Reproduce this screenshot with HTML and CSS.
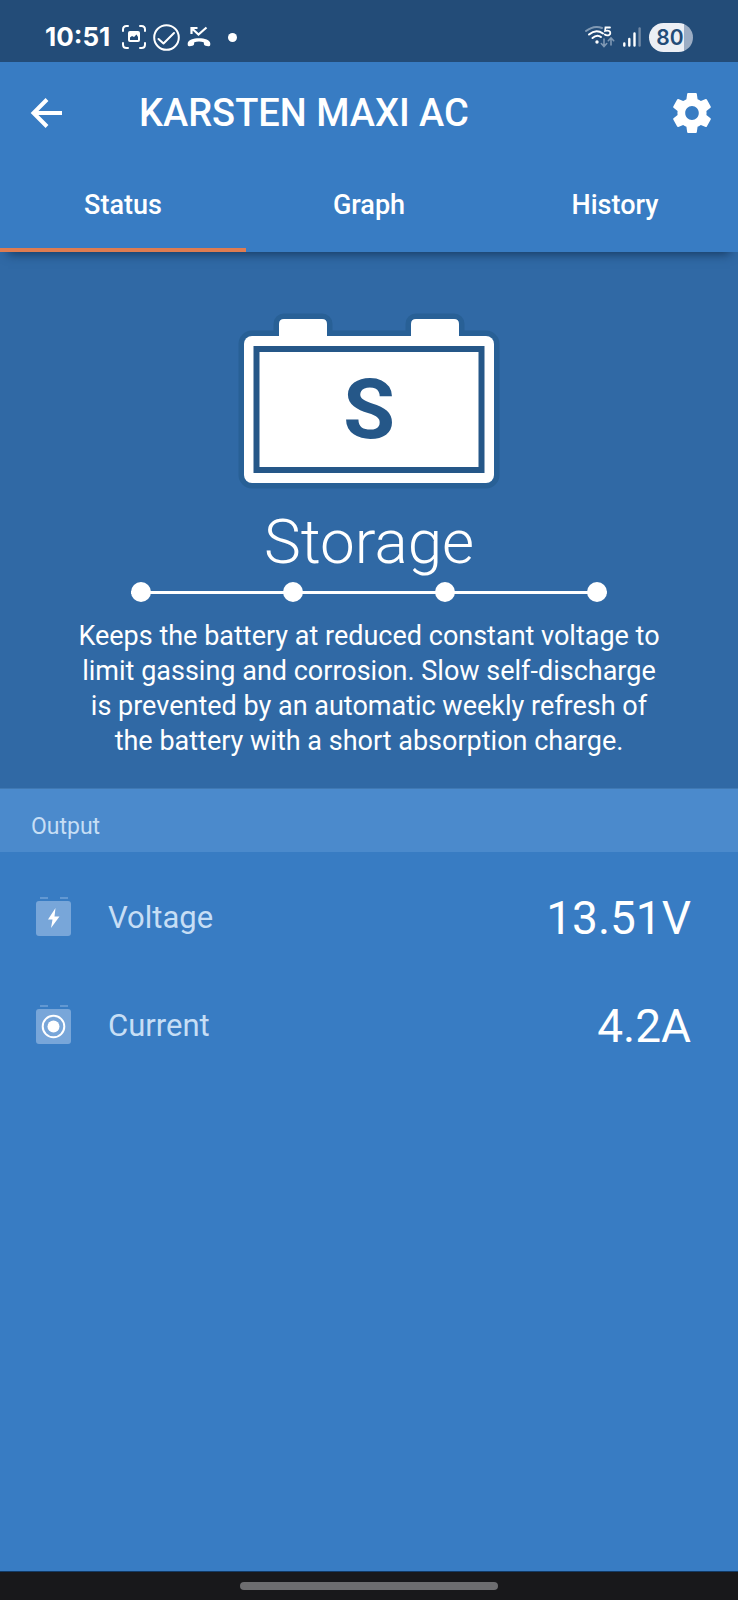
FILE: index.html
```html
<!DOCTYPE html>
<html lang="en">
<head>
<meta charset="utf-8">
<meta name="viewport" content="width=device-width, initial-scale=1">
<title>KARSTEN MAXI AC</title>
<link rel="stylesheet" href="styles.css">
</head>
<body>
<div class="screen">
  <div class="statusbar">
    <span class="clock">10:51</span>
    <div class="notifications">
      <svg width="24" height="24" viewBox="0 0 24 24" fill="none" stroke="#fff" stroke-width="2" stroke-linecap="round">
        <path d="M1 6V4.500Q1 1 4.500 1H6M18 1h1.500Q23 1 23 4.500V6M23 18v1.500Q23 23 19.500 23H18M6 23H4.500Q1 23 1 19.500V18"/>
        <rect x="6" y="6" width="12" height="11" rx="2" fill="#fff" stroke="none"/>
        <path d="M8 15v-2.500l2-1.500 2 1 2.500-2.500L16 12v3z" fill="#234c78" stroke="none"/>
      </svg>
      <svg width="27" height="27" viewBox="0 0 27 27" fill="none" stroke="#fff" stroke-width="2" stroke-linecap="round" stroke-linejoin="round">
        <circle cx="13.500" cy="13.500" r="12.300"/>
        <path d="M5.500 15l5 4.500L21 9"/>
      </svg>
      <svg width="24" height="22" viewBox="0 0 24 22" fill="none" stroke="#fff">
        <path d="M4.500 8V2H10.500M5 2.500l6.500 6L19.500 1.500" stroke-width="2.200"/>
        <path d="M.7 17.500C1 10.500 23 10.500 23.300 17.500c.1 2.500-.6 2.900-2 2.700-1.800-.3-4-.4-4.300-1.700l-.3-2.300c-3-1-6.400-1-9.400 0L7 18.500c-.3 1.300-2.500 1.400-4.300 1.700-1.400.2-2.100-.2-2-2.700z" fill="#fff" stroke="none"/>
      </svg>
      <span class="more-dot"></span>
    </div>
    <div class="system">
      <svg width="30" height="22" viewBox="0 0 30 22" fill="none" stroke="#fff" stroke-width="2" stroke-linecap="round">
        <path d="M1 5Q9-1 17 2" stroke="#7f98b3"/>
        <path d="M4 8.500Q11 2.500 18 7.500M7.500 12Q12 8 16 11"/>
        <circle cx="12" cy="16" r="1.700" fill="#fff" stroke="none"/>
        <path d="M25 1.500h-4.500l-.4 3.500c4-1 5.200.5 5.200 2 0 2.600-3.700 3-5.500 1.500" stroke-width="1.800"/>
        <path d="M19 13v7m-2.700-2.500L19 20.500l2.700-3M26 19v-7m-2.700 2.700L26 12l2.700 2.700" stroke="#7f98b3" stroke-width="1.600"/>
      </svg>
      <svg width="18" height="20" viewBox="0 0 18 20" stroke-width="2.400" stroke-linecap="round" stroke="#fff">
        <path d="M1.300 16.500v2M6.300 12v6.500M11.500 6.500v12"/>
        <path d="M16.600 1.500v17" stroke="#7189a5"/>
      </svg>
      <span class="charge">80</span>
    </div>
  </div>

  <header class="appbar">
    <div class="toolbar">
      <button class="icon-button" type="button" aria-label="Back">
        <svg width="32" height="32" viewBox="0 0 32 32" fill="none" stroke="#fff" stroke-width="4">
          <path d="M17 2.500L3.500 16 17 29.500M3.500 16H32"/>
        </svg>
      </button>
      <h1 class="title">KARSTEN MAXI AC</h1>
      <button class="icon-button" type="button" aria-label="Settings">
        <svg width="38" height="40" viewBox="2.200 2 19.600 20" preserveAspectRatio="none" fill="#fff">
          <path d="M19.430 12.980c.04-.32.070-.64.070-.98s-.03-.66-.07-.98l2.110-1.650c.19-.15.24-.42.120-.64l-2-3.460c-.12-.22-.39-.3-.61-.22l-2.490 1c-.52-.4-1.080-.73-1.690-.98l-.38-2.650C14.460 2.180 14.250 2 14 2h-4c-.25 0-.46.180-.49.420l-.38 2.650c-.61.25-1.170.59-1.690.98l-2.490-1c-.23-.09-.49 0-.61.220l-2 3.460c-.13.22-.07.490.12.640l2.110 1.650c-.04.320-.07.650-.07.980s.03.660.070.980l-2.110 1.650c-.19.150-.24.420-.12.640l2 3.460c.12.220.39.300.61.220l2.490-1c.52.400 1.080.730 1.690.980l.38 2.650c.03.240.240.420.490.420h4c.25 0 .46-.18.490-.42l.38-2.650c.61-.25 1.170-.59 1.690-.98l2.490 1c.23.090.490 0 .610-.22l2-3.460c.12-.22.070-.49-.12-.64l-2.110-1.650zM12 15.500c-1.930 0-3.500-1.570-3.500-3.500s1.570-3.500 3.500-3.500 3.500 1.570 3.500 3.500-1.570 3.500-3.500 3.500z"/>
        </svg>
      </button>
    </div>
    <nav class="tabs">
      <button class="tab tab-active" type="button">Status</button>
      <button class="tab" type="button">Graph</button>
      <button class="tab" type="button">History</button>
    </nav>
  </header>

  <main class="content">
    <section class="hero">
      <svg class="battery" width="262" height="176" viewBox="0 0 262 176">
        <g fill="#fff" stroke="#286096" stroke-width="11" stroke-linejoin="round">
          <rect x="41" y="6" width="48" height="30" rx="5"/>
          <rect x="173" y="6" width="48" height="30" rx="5"/>
          <rect x="6" y="23" width="250" height="147" rx="8"/>
        </g>
        <path d="M41 28V11q0-5 5-5h38q5 0 5 5v17zM173 28V11q0-5 5-5h38q5 0 5 5v17z" fill="#fff"/>
        <rect x="6" y="23" width="250" height="147" rx="8" fill="#fff"/>
        <rect x="18.500" y="36" width="225" height="121" fill="#fff" stroke="#255788" stroke-width="6"/>
        <text class="battery-letter" x="131" y="125" text-anchor="middle">S</text>
      </svg>
      <h2 class="stage">Storage</h2>
      <div class="progress">
        <span class="step"></span><span class="step"></span><span class="step"></span><span class="step"></span>
      </div>
      <p class="description">Keeps the battery at reduced constant voltage to limit gassing and corrosion. Slow self-discharge is prevented by an automatic weekly refresh of the battery with a short absorption charge.</p>
    </section>

    <section class="output">
      <h3 class="section-title">Output</h3>
      <dl class="readings">
        <div class="reading">
          <svg class="reading-icon" width="35" height="39" viewBox="0 0 35 39">
            <path d="M4 0h8v2H4zM24 0h8v2h-8z" fill="#6298d2"/>
            <rect y="4" width="35" height="35" rx="3" fill="#78a6d9"/>
            <path d="M19.500 11L12 22.500h4.500L15 31l8.500-11.500H18.500z" fill="#fff"/>
          </svg>
          <dt class="label">Voltage</dt>
          <dd class="value">13.51V</dd>
        </div>
        <div class="reading">
          <svg class="reading-icon" width="35" height="39" viewBox="0 0 35 39">
            <path d="M4 0h8v2H4zM24 0h8v2h-8z" fill="#6298d2"/>
            <rect y="4" width="35" height="35" rx="3" fill="#78a6d9"/>
            <circle cx="17.500" cy="21.500" r="10.800" fill="none" stroke="#fff" stroke-width="2"/>
            <circle cx="17.500" cy="21.500" r="6" fill="#fff"/>
          </svg>
          <dt class="label">Current</dt>
          <dd class="value">4.2A</dd>
        </div>
      </dl>
    </section>
  </main>

  <footer class="gesture-bar"><span class="handle"></span></footer>
</div>
</body>
</html>
```

FILE: styles.css
```css
* {
  box-sizing: border-box;
}

body,
h1,
h2,
h3,
p,
dl,
dd {
  margin: 0;
}

body {
  background: #387cc3;
  color: #fff;
  font-family: Roboto, "Liberation Sans", sans-serif;
}

button {
  padding: 0;
  border: 0;
  background: none;
  color: inherit;
  font: inherit;
  cursor: pointer;
}

svg {
  display: block;
  flex: none;
}

.screen {
  display: flex;
  flex-direction: column;
  min-height: 100vh;
}

.statusbar {
  display: flex;
  align-items: center;
  gap: 12px;
  height: 62px;
  padding: 12px 45px 0;
  background: #234c78;
}

.clock {
  font: 700 26px/28px Inter, Roboto, sans-serif;
}

.notifications {
  display: flex;
  align-items: center;
  gap: 7px;
}

.more-dot {
  width: 9px;
  height: 9px;
  margin-left: 10px;
  border-radius: 50%;
  background: #fff;
}

.system {
  display: flex;
  align-items: center;
  gap: 8px;
  margin-left: auto;
}

.charge {
  width: 44px;
  height: 29px;
  padding-right: 2px;
  border-radius: 15px;
  background: linear-gradient(90deg, #eceff5 80%, #9cadc4 80%);
  color: #234c78;
  font: 600 21px/29px Inter, Roboto, sans-serif;
  text-align: center;
}

.appbar {
  position: relative;
  background: #387cc3;
  box-shadow: 0 10px 10px -8px #16395f;
}

.toolbar {
  display: flex;
  align-items: center;
  height: 102px;
  padding: 0 27px 0 30px;
}

.icon-button {
  display: flex;
}

.title {
  flex: 1;
  padding-left: 77px;
  font-size: 38px;
  font-weight: 500;
  line-height: 44px;
}

.tabs {
  display: grid;
  grid-template-columns: repeat(3, 1fr);
  height: 88px;
}

.tab {
  padding-bottom: 2px;
  border-bottom: 4px solid transparent;
  font-size: 27px;
  font-weight: 500;
  line-height: 32px;
}

.tab-active {
  border-bottom-color: #df7c51;
}

.content {
  flex: 1;
}

.hero {
  display: flex;
  flex-direction: column;
  align-items: center;
  padding: 61px 72px 29px;
  border-bottom: 1px solid #4079b3;
  background: #3069a5;
}

.battery-letter {
  fill: #255788;
  font-size: 84px;
  font-weight: 700;
}

.stage {
  margin-top: 15px;
  font-size: 62px;
  font-weight: 300;
  line-height: 76px;
}

.progress {
  display: flex;
  justify-content: space-between;
  width: 80%;
  margin-top: 2px;
  background: linear-gradient(#fff, #fff) center / 100% 3px no-repeat;
}

.step {
  width: 20px;
  height: 20px;
  border-radius: 50%;
  background: #fff;
}

.description {
  margin-top: 17px;
  font-size: 27px;
  line-height: 35px;
  text-align: center;
}

.section-title {
  padding: 23px 31px 10px;
  background: #4b8acc;
  color: #c6def5;
  font-size: 23px;
  font-weight: 400;
  line-height: 30px;
}

.readings {
  padding-top: 12px;
}

.reading {
  display: flex;
  align-items: center;
  height: 108px;
  padding: 0 47px 0 36px;
}

.reading-icon {
  margin-bottom: 4px;
}

.label {
  padding-left: 37px;
  color: #c6def5;
  font-size: 31px;
  line-height: 36px;
}

.value {
  margin-left: auto;
  font-size: 46px;
  line-height: 54px;
}

.gesture-bar {
  display: flex;
  align-items: center;
  justify-content: center;
  height: 29px;
  border-top: 1px solid #123a66;
  background: #18181b;
}

.handle {
  width: 35%;
  height: 8px;
  border-radius: 4px;
  background: #6d6d70;
}
```
